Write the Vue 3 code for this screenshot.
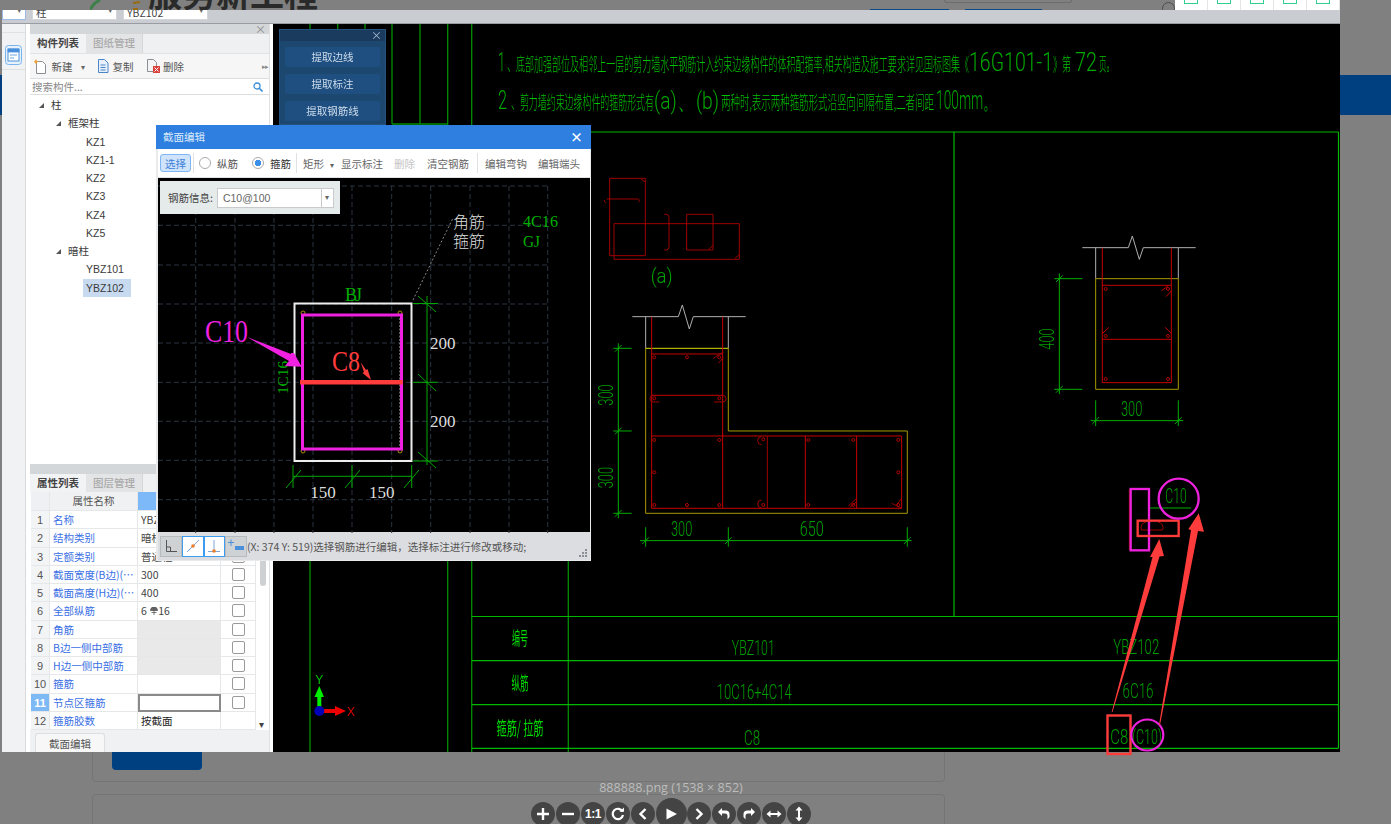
<script setup>
const tree = [
  { label: '柱', level: 0, open: true },
  { label: '框架柱', level: 1, open: true },
  { label: 'KZ1', level: 2 },
  { label: 'KZ1-1', level: 2 },
  { label: 'KZ2', level: 2 },
  { label: 'KZ3', level: 2 },
  { label: 'KZ4', level: 2 },
  { label: 'KZ5', level: 2 },
  { label: '暗柱', level: 1, open: true },
  { label: 'YBZ101', level: 2 },
  { label: 'YBZ102', level: 2, selected: true },
]

const props = [
  { name: '名称', value: 'YBZ102', check: true },
  { name: '结构类别', value: '暗柱', check: true },
  { name: '定额类别', value: '普通柱', check: true },
  { name: '截面宽度(B边)(mm)', value: '300', check: true },
  { name: '截面高度(H边)(mm)', value: '400', check: true },
  { name: '全部纵筋', value: '6', rebar: '16', check: true },
  { name: '角筋', value: '', grey: true, check: true },
  { name: 'B边一侧中部筋', value: '', grey: true, check: true },
  { name: 'H边一侧中部筋', value: '', grey: true, check: true },
  { name: '箍筋', value: '', check: true },
  { name: '节点区箍筋', value: '', active: true, check: true },
  { name: '箍筋胶数', value: '按截面', dark: true },
]

const extractButtons = ['提取边线', '提取标注', '提取钢筋线']
const tabIcons = [0, 1, 2, 3, 4]

// grid of the section editor canvas
const gridX = [195.7, 235, 274, 313, 352, 391.7, 430.7, 470, 509, 547.7]
const gridY = [186, 225.3, 265, 304, 343, 382.3, 421.3, 460.3, 499.7]

// rebar dots, drawn in 3x coordinates
const lDots = [[193,622],[291,622],[388,622],[193,745],[388,745],[193,870],[388,870],[520,868],[655,870],[790,870],[925,870],[193,967],[925,967],[193,1065],[291,1065],[388,1065],[520,1065],[655,1065],[790,1065],[925,1065]]
const rDots = [[197,207],[384,207],[197,348],[384,348],[197,477],[384,477]]
</script>

<template>
  <div class="page">
    <header class="site-head">
      <svg class="logo" width="54" height="10" viewBox="0 0 54 10">
        <path d="M0 10Q3 3 10 0" fill="none" stroke="#3f7f4a" stroke-width="3" />
        <path d="M43 3L50 2M43 9H48" fill="none" stroke="#9a6a10" stroke-width="2" />
      </svg>
      <div class="site-title">服务新工程</div>
      <div class="site-right">
        <div class="site-links"><span></span><span></span></div>
        <div class="site-search"></div>
        <div class="site-ring"></div>
        <div class="site-tabs">
          <div v-for="i in tabIcons" :key="i" class="site-tab"><span></span></div>
        </div>
      </div>
    </header>
    <div class="nav-band"></div>
    <main class="content">
      <div class="card card-a"><div class="blue-btn"></div></div>
      <div class="card card-b"></div>
    </main>

    <div class="lightbox">
      <div class="strip">
        <div class="sel sel-first"><span>▾</span></div>
        <div class="sel sel-a">柱<span>▾</span></div>
        <div class="sel sel-b">YBZ102<span>▾</span></div>
      </div>
      <div class="body">
        <div class="rail">
          <div class="rail-top"></div>
          <div class="rail-icon">
            <svg width="17" height="20" viewBox="0 0 17 20">
              <rect x="0.5" y="0.5" width="16" height="19" rx="3" fill="#e6f1fc" stroke="#78b4ee" />
              <rect x="3" y="4" width="11" height="12" fill="#fff" stroke="#4a8fdc" />
              <path d="M3 4h11v3H3zM5 10h7M5 13h4" fill="#4a8fdc" stroke="#4a8fdc" stroke-width="0.8" />
            </svg>
          </div>
        </div>

        <div class="panels">
          <section class="panel panel-list">
            <div class="panel-head">×</div>
            <div class="tabs">
              <div class="tab on">构件列表</div>
              <div class="tab">图纸管理</div>
            </div>
            <div class="tools">
              <span class="tool">
                <svg width="14" height="15" viewBox="0 0 14 15"><path d="M2.5 2.5h6l3 3v9h-9z" fill="#fff" stroke="#8a8f95" /><path d="M2 0l1 2 2 .5-2 1-1 2-1-2L-1 2.500 1 2z" fill="#e9a13b" /></svg>
                新建<i>▾</i>
              </span>
              <span class="tool">
                <svg width="12" height="14" viewBox="0 0 12 14"><path d="M1.500 .5h6l3.500 3.500v9.500h-9.500z" fill="#e8f1fb" stroke="#4a86c8" /><path d="M3.500 6h5M3.500 8.500h5M3.500 11h5" stroke="#4a86c8" /></svg>
                复制
              </span>
              <span class="tool">
                <svg width="13" height="14" viewBox="0 0 13 14"><path d="M.5.5h6l3 3v9h-9z" fill="#f4f4f4" stroke="#8a8f95" /><rect x="6" y="7" width="7" height="7" fill="#d9403a" /><path d="M7.500 8.500l4 4m0-4l-4 4" stroke="#fff" /></svg>
                删除
              </span>
              <span class="more">▸▸</span>
            </div>
            <div class="search">
              <span>搜索构件...</span>
              <svg width="10" height="10" viewBox="0 0 10 10"><circle cx="4" cy="4" r="3" fill="none" stroke="#3b8fd8" stroke-width="1.300" /><path d="M6.300 6.300L9.500 9.500" stroke="#3b8fd8" stroke-width="1.600" /></svg>
            </div>
            <ul class="tree">
              <li v-for="node in tree" :key="node.label" :class="['tree-row', 'lv' + node.level]">
                <i v-if="node.open" class="tri"></i>
                <span :class="{ picked: node.selected }">{{ node.label }}</span>
              </li>
            </ul>
          </section>

          <section class="panel panel-props">
            <div class="panel-head"></div>
            <div class="tabs">
              <div class="tab on">属性列表</div>
              <div class="tab">图层管理</div>
            </div>
            <div class="prop-wrap">
              <div class="prop-table">
                <div class="prop-row prop-header">
                  <div class="c-idx"></div>
                  <div class="c-name">属性名称</div>
                  <div class="c-val"></div>
                  <div class="c-chk"></div>
                </div>
                <div v-for="(p, i) in props" :key="p.name" class="prop-row">
                  <div :class="['c-idx', { on: p.active }]">{{ i + 1 }}</div>
                  <div class="c-name link"><span>{{ p.name }}</span></div>
                  <div :class="['c-val', { grey: p.grey, active: p.active, dark: p.dark }]">
                    {{ p.value }}
                    <template v-if="p.rebar">
                      <svg width="8" height="8" viewBox="0 0 8 8"><path d="M.5 3.500a3.500 3.500 0 0 1 7 0zM4 0v8M1.500 5.500h5" fill="#666" stroke="#555" stroke-width=".8" /></svg>{{ p.rebar }}
                    </template>
                  </div>
                  <div class="c-chk"><i v-if="p.check" class="box"></i></div>
                </div>
              </div>
              <div class="scroll">
                <div class="thumb"></div>
                <div class="down">▾</div>
              </div>
            </div>
            <div class="prop-foot"><div class="foot-tab">截面编辑</div></div>
          </section>
        </div>

        <div class="cad">
          <svg class="cad-svg" width="1067" height="728" viewBox="273 24 1067 728">
            <path class="bar" d="M310 24V752M337.700 24V124M365 24V124M392 24V124M420 24V124M447.700 24V752M392 124H447.700M471.700 24V752M568.300 132V752" />
            <path class="bar-lt" d="M471.700 132H1338.500M954 132V617M1338.500 132V748.300M471.700 616.500H1338.500M471.700 660.700H1338.500M471.700 704.700H1338.500M471.700 748.300H1338.500" />

            <!-- notes -->
            <g class="note">
              <text y="71">
                <tspan x="498" font-size="26" textLength="7" lengthAdjust="spacingAndGlyphs">1</tspan>
                <tspan class="cjk" x="507" font-size="18" textLength="462" lengthAdjust="spacingAndGlyphs">、底部加强部位及相邻上一层的剪力墙水平钢筋计入约束边缘构件的体积配箍率,相关构造及施工要求详见国标图集《</tspan>
                <tspan x="969" font-size="26" textLength="84" lengthAdjust="spacingAndGlyphs">16G101-1</tspan>
                <tspan class="cjk" x="1053" font-size="18" textLength="18" lengthAdjust="spacingAndGlyphs">》第</tspan>
                <tspan x="1075" font-size="26" textLength="22" lengthAdjust="spacingAndGlyphs">72</tspan>
                <tspan class="cjk" x="1099" font-size="18" textLength="15" lengthAdjust="spacingAndGlyphs">页。</tspan>
              </text>
              <text y="109">
                <tspan x="498" font-size="26" textLength="9" lengthAdjust="spacingAndGlyphs">2</tspan>
                <tspan class="cjk" x="511" font-size="18" textLength="143" lengthAdjust="spacingAndGlyphs">、剪力墙约束边缘构件的箍筋形式有</tspan>
                <tspan x="654" font-size="23" textLength="65" lengthAdjust="spacingAndGlyphs">(a)、(b)</tspan>
                <tspan class="cjk" x="721" font-size="18" textLength="213" lengthAdjust="spacingAndGlyphs">两种时,表示两种箍筋形式沿竖向间隔布置,二者间距</tspan>
                <tspan x="936" font-size="26" textLength="61" lengthAdjust="spacingAndGlyphs">100mm。</tspan>
              </text>
            </g>

            <!-- L shaped wall -->
            <g transform="translate(590 150) scale(0.3333)">
              <g class="red-dk">
                <path d="M59 85H166V317H59ZM72 221H448V328H72ZM290 193H369V300H290Z" />
                <path d="M43 150a6 6 0 0 0 6 8M50 147H145a6 6 0 0 1 0 10M223 193h6q8 0 8 10V290q0 10-8 10h-6M154 88L166 96M356 298L369 286M434 326L448 314" />
              </g>
              <text class="dim" x="215" y="400" font-size="62" text-anchor="middle" textLength="66" lengthAdjust="spacingAndGlyphs">(a)</text>
              <path class="grey" d="M127 500H265L277 465L298 537L310 500H467M167 500V595M415 500V595" />
              <path class="yl" d="M167 595V1090H952V843H415V595" />
              <path class="yl-br" d="M167 595H415" />
              <path class="red" d="M185 500V1075M398 500V1075M185 612H398M185 736H398M185 858H935V1075H185M646 858V1075M800 858V1075" />
              <path class="red-dk" d="M532 858V1075M370 625L398 607M385 640L400 622M190 736a10 10 0 0 0 0 20H208M398 736a10 10 0 0 1 0 20H372M515 860a8 8 0 0 0 0 24M515 1050a8 8 0 0 0 0 24M775 1068L800 1045M780 1072L800 1055M905 1060L935 1075M920 1065L935 1045" />
              <circle v-for="d in lDots" :key="d.join()" class="dot" :cx="d[0]" :cy="d[1]" r="4.500" />
              <path class="dim-line" d="M85 580V1105M70 595H125M70 843H125M70 1090H125M75 605L95 585M75 853L95 833M75 1100L95 1080M150 1172H965M167 1132V1190M415 1132V1190M952 1132V1190M157 1182L177 1162M405 1182L425 1162M942 1182L962 1162" />
              <text class="dim" transform="translate(70 735) rotate(-90)" font-size="60" text-anchor="middle" textLength="64" lengthAdjust="spacingAndGlyphs">300</text>
              <text class="dim" transform="translate(70 983) rotate(-90)" font-size="60" text-anchor="middle" textLength="64" lengthAdjust="spacingAndGlyphs">300</text>
              <text class="dim" x="275" y="1158" font-size="60" text-anchor="middle" textLength="64" lengthAdjust="spacingAndGlyphs">300</text>
              <text class="dim" x="665" y="1158" font-size="60" text-anchor="middle" textLength="72" lengthAdjust="spacingAndGlyphs">650</text>
            </g>

            <!-- column YBZ102 -->
            <g transform="translate(1040 220) scale(0.3333)">
              <path class="grey" d="M127 83H265L277 48L298 118L310 83H467M167 83V176M415 83V176" />
              <path class="yl" d="M167 176H415V508H167Z" />
              <path class="red" d="M187 83V488H394V83M187 196H394M187 358H394M365 212L385 197M378 230L394 213M188 340L207 322M375 322L394 340" />
              <circle v-for="d in rDots" :key="d.join()" class="dot" :cx="d[0]" :cy="d[1]" r="4.500" />
              <path class="dim-line" d="M58 160V522M43 176H127M43 508H127M48 186L68 166M48 518L68 498M152 602H430M167 541V618M415 541V618M157 612L177 592M405 612L425 592" />
              <text class="dim" transform="translate(43 357) rotate(-90)" font-size="60" text-anchor="middle" textLength="64" lengthAdjust="spacingAndGlyphs">400</text>
              <text class="dim" x="275" y="587" font-size="60" text-anchor="middle" textLength="64" lengthAdjust="spacingAndGlyphs">300</text>
            </g>

            <!-- section detail with markup -->
            <g transform="translate(1090 470) scale(0.3333)">
              <path class="dim-line" d="M180 114H303" />
              <path class="red-dk" stroke-width="5" d="M118 57V241M154 180a18 18 0 0 1 14-24M154 180H218a18 18 0 0 0-14-24" />
              <text class="dim" x="258" y="100" font-size="62" text-anchor="middle" textLength="64" lengthAdjust="spacingAndGlyphs">C10</text>
              <rect x="122" y="57" width="55" height="184" fill="none" stroke="#ee22dd" stroke-width="7" />
              <rect x="143" y="152" width="123" height="46" fill="none" stroke="#ff3c3c" stroke-width="7" />
              <circle cx="266" cy="86" r="60" fill="none" stroke="#ee22dd" stroke-width="7" />
            </g>

            <!-- table -->
            <g class="note-sm">
              <text class="cjk" x="520" y="645" font-size="18" text-anchor="middle" textLength="16" lengthAdjust="spacingAndGlyphs">编号</text>
              <text class="cjk" x="520" y="690" font-size="18" text-anchor="middle" textLength="17" lengthAdjust="spacingAndGlyphs">纵筋</text>
              <text class="cjk" x="520" y="735" font-size="18" text-anchor="middle" textLength="47" lengthAdjust="spacingAndGlyphs">箍筋/ 拉筋</text>
            </g>
            <g class="cell">
              <text x="753.300" y="655" text-anchor="middle" textLength="43" lengthAdjust="spacingAndGlyphs">YBZ101</text>
              <text x="754.300" y="699" text-anchor="middle" textLength="75" lengthAdjust="spacingAndGlyphs">10C16+4C14</text>
              <text x="752" y="745" text-anchor="middle" textLength="16" lengthAdjust="spacingAndGlyphs">C8</text>
              <text x="1136.300" y="654" text-anchor="middle" textLength="46" lengthAdjust="spacingAndGlyphs">YBZ102</text>
              <text x="1138" y="698" text-anchor="middle" textLength="31" lengthAdjust="spacingAndGlyphs">6C16</text>
              <text x="1119.300" y="744" text-anchor="middle" textLength="18" lengthAdjust="spacingAndGlyphs">C8</text>
              <text x="1147" y="744" text-anchor="middle" textLength="30" lengthAdjust="spacingAndGlyphs">(C10)</text>
            </g>
            <rect x="1107.500" y="715.500" width="23" height="38.500" fill="none" stroke="#ff3c3c" stroke-width="2.400" />
            <ellipse cx="1147.300" cy="735" rx="16" ry="15.500" fill="none" stroke="#ee22dd" stroke-width="2.200" />
            <polygon class="arrow" points="1111.700,712 1152.500,557 1150,557 1159.300,539 1164,556 1159.500,556.500 1112.500,712" />
            <polygon class="arrow" points="1159,725 1191,530 1188.300,529.300 1198.700,513.300 1204,531.700 1198,531 1160,725" />

            <!-- axis -->
            <path d="M319.300 711V696" stroke="#00ee00" stroke-width="4" />
            <path d="M314.500 697L319.300 686L324 697Z" fill="#00ee00" />
            <path d="M319.300 711H336" stroke="#ee0000" stroke-width="4" />
            <path d="M335 706L346 711L335 716Z" fill="#ee0000" />
            <circle cx="319.300" cy="711" r="5" fill="#0000b8" />
            <text class="axis" x="319.300" y="684" fill="#00c000" text-anchor="middle">Y</text>
            <text class="axis" x="351" y="716" fill="#e00000" text-anchor="middle">X</text>
          </svg>

          <div class="extract">
            <div class="extract-head">×</div>
            <div v-for="b in extractButtons" :key="b" class="extract-btn">{{ b }}</div>
          </div>
        </div>
      </div>

      <!-- floating dialog -->
      <div class="dialog">
        <div class="dlg-title"><span>截面编辑</span><b>×</b></div>
        <div class="dlg-tools">
          <span class="pick">选择</span>
          <i class="sep"></i>
          <span class="radio-item"><i class="radio"></i>纵筋</span>
          <span class="radio-item"><i class="radio checked"></i>箍筋</span>
          <i class="sep"></i>
          <span class="t-btn shape">矩形<em>▾</em></span>
          <span class="t-btn">显示标注</span>
          <span class="t-btn off">删除</span>
          <span class="t-btn">清空钢筋</span>
          <i class="sep"></i>
          <span class="t-btn">编辑弯钩</span>
          <span class="t-btn">编辑端头</span>
        </div>
        <div class="dlg-canvas">
          <svg width="432" height="355" viewBox="158 178 432 355">
            <line v-for="x in gridX" :key="'x' + x" class="grid" :x1="x" :x2="x" y1="186" y2="533" />
            <line v-for="y in gridY" :key="'y' + y" class="grid" :y1="y" :y2="y" x1="158" x2="550" />
            <path d="M413 300L453 218" stroke="#888" stroke-dasharray="2 2" fill="none" />
            <text class="cn-lbl" x="453" y="228">角筋</text>
            <text class="cn-lbl" x="453" y="247">箍筋</text>
            <text class="sf green" x="523" y="227" font-size="16" textLength="35" lengthAdjust="spacingAndGlyphs">4C16</text>
            <text class="sf green" x="523" y="247" font-size="16" textLength="17" lengthAdjust="spacingAndGlyphs">GJ</text>
            <text class="sf green" x="345" y="301" font-size="18" textLength="17" lengthAdjust="spacing">BJ</text>

            <rect x="294.500" y="303.500" width="117" height="157.500" fill="none" stroke="#eee" stroke-width="2" />
            <path d="M303.500 318V447M400 318V447" stroke="#bbb" stroke-dasharray="2 1.500" fill="none" />
            <g fill="none" stroke="#a89000">
              <circle cx="303" cy="313" r="2" /><circle cx="400" cy="313" r="2" />
              <circle cx="303" cy="451" r="2" /><circle cx="400" cy="451" r="2" />
            </g>
            <rect x="302.500" y="315" width="99" height="134" fill="none" stroke="#f020e0" stroke-width="3" />
            <path d="M300 382.300H402.700" stroke="#ff3c3c" stroke-width="4.500" />

            <path class="d-green" d="M427 296V465M413 303.500H438M413 382.300H438M413 461H438M418 296L436 312M418 374L436 391M418 452L436 468M293 476.300H411.700M293 465V488M352 465V488M411.700 465V488M286 488L301 470M345 488L360 470M404 488L419 470" />
            <text class="sf wh" x="430" y="349" font-size="17">200</text>
            <text class="sf wh" x="430" y="427" font-size="17">200</text>
            <text class="sf wh" x="323" y="498" font-size="17" text-anchor="middle">150</text>
            <text class="sf wh" x="381.700" y="498" font-size="17" text-anchor="middle">150</text>
            <text class="sf green" transform="translate(288 394) rotate(-90)" font-size="15" textLength="33" lengthAdjust="spacingAndGlyphs">1C16</text>

            <text class="sf" x="205" y="342" font-size="31" fill="#f020e0" textLength="43" lengthAdjust="spacingAndGlyphs">C10</text>
            <polygon points="247,337 291,354 291,353 294,353 301.700,366.700 285,366 289,361" fill="#f020e0" />
            <text class="sf" x="332" y="371" font-size="29" fill="#ff3c3c" textLength="28" lengthAdjust="spacingAndGlyphs">C8</text>
            <polygon points="360.700,362.300 366,370 367.500,369 371,380 362.500,373 364,372" fill="#ff3c3c" />
          </svg>
          <div class="info">
            <span>钢筋信息:</span>
            <div class="combo"><span>C10@100</span><i>▾</i></div>
          </div>
        </div>
        <div class="dlg-status">
          <div class="snap">
            <div class="snap-btn">
              <svg width="18" height="16" viewBox="0 0 18 16"><path d="M4.500 2V13.500H15M4.500 9H8.500V13.500" fill="none" stroke="#555" /></svg>
            </div>
            <div class="snap-btn on">
              <svg width="18" height="16" viewBox="0 0 18 16"><path d="M3 14L15 2" stroke="#7aa6d8" /><circle cx="9" cy="8" r="1.800" fill="#ee7d2a" /></svg>
            </div>
            <div class="snap-btn on">
              <svg width="18" height="16" viewBox="0 0 18 16"><path d="M9 2V13M3 13.500H15" stroke="#7aa6d8" /><circle cx="9" cy="13" r="1.800" fill="#ee7d2a" /></svg>
            </div>
            <div class="snap-btn">
              <svg width="18" height="16" viewBox="0 0 18 16"><path d="M4 1.500V8M1 4.500H7" stroke="#4a8fdc" /><rect x="8" y="8" width="9" height="4" fill="#4a8fdc" /></svg>
            </div>
          </div>
          <span class="status-text">(X: 374 Y: 519)选择钢筋进行编辑，选择标注进行修改或移动;</span>
          <svg class="grip" width="8" height="8" viewBox="0 0 8 8"><path d="M6 0h2v2H6zM3 3h2v2H3zM6 3h2v2H6zM0 6h2v2H0zM3 6h2v2H3zM6 6h2v2H6z" fill="#8a8f95" /></svg>
        </div>
      </div>
    </div>

    <!-- viewer caption and controls -->
    <div class="caption">888888.png (1538 × 852)</div>
    <div class="controls">
      <button class="ctl"><svg width="14" height="14" viewBox="0 0 14 14"><path d="M7 1V13M1 7H13" stroke="#fff" stroke-width="2.400" /></svg></button>
      <button class="ctl"><svg width="14" height="14" viewBox="0 0 14 14"><path d="M1 7H13" stroke="#fff" stroke-width="2.400" /></svg></button>
      <button class="ctl one">1:1</button>
      <button class="ctl"><svg width="14" height="14" viewBox="0 0 14 14"><path d="M11.500 4.500A5.200 5.200 0 1 0 12 8" fill="none" stroke="#fff" stroke-width="2.200" /><path d="M8.500 4.800H13V0.500Z" fill="#fff" /></svg></button>
      <button class="ctl"><svg width="14" height="14" viewBox="0 0 14 14"><path d="M9.500 2L4.500 7L9.500 12" fill="none" stroke="#fff" stroke-width="2.400" /></svg></button>
      <button class="ctl play"><svg width="14" height="14" viewBox="0 0 14 14"><path d="M2.500 1.500L13 7L2.500 12.500Z" fill="#fff" /></svg></button>
      <button class="ctl"><svg width="14" height="14" viewBox="0 0 14 14"><path d="M4.500 2L9.500 7L4.500 12" fill="none" stroke="#fff" stroke-width="2.400" /></svg></button>
      <button class="ctl"><svg width="14" height="14" viewBox="0 0 14 14"><path d="M5 1L1 5L5 9V6.500H8Q10.500 6.500 10.500 9V12.500L12.500 10V7Q12.500 3.500 8.500 3.500H5Z" fill="#fff" /></svg></button>
      <button class="ctl"><svg width="14" height="14" viewBox="0 0 14 14"><path d="M9 1L13 5L9 9V6.500H6Q3.500 6.500 3.500 9V12.500L1.500 10V7Q1.500 3.500 5.500 3.500H9Z" fill="#fff" /></svg></button>
      <button class="ctl"><svg width="16" height="14" viewBox="0 0 16 14"><path d="M3 7H13" stroke="#fff" stroke-width="2" /><path d="M4.500 3.500L0.500 7L4.500 10.500ZM11.500 3.500L15.500 7L11.500 10.500Z" fill="#fff" /></svg></button>
      <button class="ctl"><svg width="14" height="16" viewBox="0 0 14 16"><path d="M7 3V13" stroke="#fff" stroke-width="2" /><path d="M3.500 4.500L7 .5L10.500 4.500ZM3.500 11.500L7 15.500L10.500 11.500Z" fill="#fff" /></svg></button>
    </div>
  </div>
</template>

<style>
html, body { margin: 0; background: #7f807f; }
</style>

<style scoped>
.page {
  position: relative;
  width: 1391px;
  height: 824px;
  overflow: hidden;
  background: #7f807f;
  font-family: "Noto Sans CJK SC", "Liberation Sans", sans-serif;
  font-size: 10.5px;
  color: #333;
}

/* dimmed page behind the viewer */
.site-head {
  display: flex;
  align-items: flex-start;
  height: 75px;
  padding-left: 90px;
}
.logo { display: block; margin-right: 4px; }
.site-title {
  margin-top: -25px;
  font-size: 34px;
  line-height: 35px;
  font-weight: 700;
  color: #2a2a2a;
}
.site-right {
  display: flex;
  align-items: flex-start;
  margin-left: auto;
  margin-right: 51px;
}
.site-links {
  display: flex;
  justify-content: space-between;
  width: 172px;
  margin-top: 9px;
}
.site-links span { height: 1px; width: 79px; background: #0a4a8a; }
.site-links span + span { width: 77px; }
.site-search {
  width: 128px;
  height: 3px;
  margin-left: -98px;
  border: 1px solid #6c6d6c;
  border-top: none;
  box-sizing: border-box;
  border-radius: 0 0 4px 4px;
}
.site-ring {
  width: 13px;
  height: 13px;
  margin-left: 90px;
  margin-top: 2px;
  box-sizing: border-box;
  border: 1px solid #4c4d4c;
  border-radius: 50%;
}
.site-tabs { display: flex; }
.site-tab {
  width: 32px;
  height: 10px;
  background: #fff;
  border-right: 1px solid #e4e4e4;
  display: flex;
  justify-content: center;
  overflow: hidden;
}
.site-tab span {
  width: 12px;
  height: 3px;
  border: 1px solid #2fcf90;
  border-top: none;
}
.nav-band { height: 40px; background: #004080; }
.content {
  width: 853px;
  margin-left: 92px;
  padding-top: 590px;
}
.card {
  border: 1px solid #737473;
  border-radius: 4px;
  background: #7f807f;
}
.card-a { height: 75px; margin-bottom: 12px; }
.blue-btn {
  width: 90px;
  height: 40px;
  margin: 12px 0 0 19px;
  background: #004080;
  border-radius: 4px;
  position: relative;
  top: 12px;
}
.card-b { height: 60px; }

/* the screenshot in the viewer */
.lightbox {
  position: absolute;
  left: 2px;
  top: 10px;
  width: 1338px;
  height: 742px;
  background: #fff;
  filter: blur(0.3px);
}
.strip {
  display: flex;
  height: 13px;
  overflow: hidden;
  background: #c9ccd0;
  border-bottom: 1px solid #999da1;
}
.sel {
  position: relative;
  height: 20px;
  margin-top: -10px;
  background: #fff;
  border: 1px solid #d4d6d9;
  line-height: 24px;
  padding-left: 3px;
  box-sizing: border-box;
  margin-right: 6px;
  color: #444;
}
.sel span { position: absolute; right: 3px; top: -3px; color: #666; font-size: 9px; }
.sel-first { width: 24px; border-color: #9bbbe6; }
.sel-a { width: 85px; }
.sel-b { width: 85px; }

.body { display: flex; height: 728px; }
.rail {
  width: 23px;
  background: #f1f2f3;
  border-right: 1px solid #d8dadc;
}
.rail-top { height: 8px; border-bottom: 1px solid #dfe1e3; }
.rail-icon {
  padding: 12px 0 0 3px;
  height: 24px;
  border-bottom: 1px solid #dfe1e3;
}
.rail-icon svg { display: block; }

.panels {
  display: flex;
  flex-direction: column;
  gap: 4px;
  width: 241px;
  padding: 0 0 0 4px;
  background: #fff;
  box-sizing: content-box;
  margin-right: 0;
}
.panel { width: 240px; border-right: 1px solid #dfe1e3; box-sizing: border-box; }
.panel-list { height: 436px; display: flex; flex-direction: column; }
.panel-props { height: 288px; display: flex; flex-direction: column; }
.panel-head {
  height: 10px;
  line-height: 10px;
  background: #d4d7da;
  text-align: right;
  padding-right: 3px;
  color: #888;
  font-size: 11px;
}
.tabs {
  display: flex;
  height: 19px;
  background: #eff0f1;
}
.tab {
  width: 56px;
  line-height: 18px;
  text-align: center;
  color: #aaa;
  background: #e3e4e6;
  border-right: 1px solid #d4d7da;
  font-weight: 500;
}
.tab.on { background: #f2f3f4; color: #444; font-weight: 700; border-right: none; }
.tools {
  display: flex;
  align-items: center;
  height: 26px;
  background: #f6f6f6;
  border-top: 1px solid #e0e2e4;
  border-bottom: 1px solid #dcdee0;
  box-sizing: border-box;
  padding-left: 4px;
  gap: 13px;
  color: #555;
  font-size: 10.5px;
}
.tool { display: flex; align-items: center; gap: 3.5px; }
.tool i { font-style: normal; font-size: 8px; margin-left: 5px; margin-right: -1px; color: #666; }
.more { margin-left: auto; margin-right: 1px; color: #888; font-size: 7px; letter-spacing: -1px; }
.search {
  display: flex;
  justify-content: space-between;
  align-items: center;
  height: 16px;
  padding: 0 6px 0 2px;
  background: #fff;
  border-bottom: 1px solid #dcdee0;
  box-sizing: border-box;
  color: #888;
}
.tree { list-style: none; margin: 0; padding: 1px 0 0; flex: 1; background: #fff; }
.tree-row {
  position: relative;
  height: 18.25px;
  line-height: 18.25px;
  color: #3b3b3b;
  box-sizing: border-box;
}
.tree-row span { display: inline-block; padding: 0 3px; }
.picked { background: #c8daf0; height: 18.25px; padding-right: 7px !important; }
.lv0 { padding-left: 18px; }
.lv1 { padding-left: 35px; }
.lv2 { padding-left: 53px; font-family: "Liberation Sans", sans-serif; font-size: 10.5px; }
.tri {
  position: absolute;
  top: 7px;
  width: 0;
  height: 0;
  border-left: 5px solid transparent;
  border-bottom: 5px solid #555;
}
.lv0 .tri { left: 9px; }
.lv1 .tri { left: 26px; }

.prop-wrap { display: flex; padding-left: 1px; background: #fff; }
.prop-table { width: 225px; }
.prop-row {
  display: grid;
  grid-template-columns: 19px 88px 83px 35px;
  height: 18.25px;
  line-height: 18.5px;
}
.prop-header { height: 19.25px; }
.prop-row > div {
  border-right: 1px solid #e6e7e9;
  border-bottom: 1px solid #e6e7e9;
  box-sizing: border-box;
  overflow: hidden;
  white-space: nowrap;
}
.c-idx { text-align: center; background: #f3f4f5; color: #555; font-size: 11px; font-family: "Liberation Sans", sans-serif; }
.c-idx.on { background: #7db9f5; color: #fff; font-weight: 700; }
.prop-header .c-idx { background: #eef0f3; }
.prop-header .c-name { background: #f0f1f2; text-align: center; color: #555; }
.prop-header .c-val { background: #7db8f8; }
.link { color: #3a6fe4; padding-left: 3px; }
.link span { display: block; overflow: hidden; text-overflow: ellipsis; }
.c-val { padding-left: 3px; color: #444; }
.c-val svg { margin: 0 0 2px 1px; vertical-align: middle; }
.c-val.grey { background: #e9e9e9; }
.c-val.active { border: 1px solid #8a8a8a; outline: 1px solid #8a8a8a; outline-offset: -2px; background: #fff; }
.c-val.dark { color: #222; }
.c-chk { display: flex; align-items: center; justify-content: center; }
.box {
  display: block;
  width: 11px;
  height: 11px;
  border: 1px solid #9a9a9a;
  border-radius: 2px;
  background: #fff;
}
.scroll { position: relative; flex: 1; background: #fff; }
.thumb {
  position: absolute;
  left: 4px;
  top: 58px;
  width: 6px;
  height: 36px;
  border-radius: 3px;
  background: #cfd0d1;
}
.down { position: absolute; left: 3px; bottom: 0; font-size: 10px; line-height: 12px; color: #444; }
.prop-foot { flex: 1; background: #f0f1f2; padding: 3px 0 0 5px; }
.foot-tab {
  width: 68px;
  height: 18px;
  line-height: 20px;
  text-align: center;
  background: #f7f7f7;
  border: 1px solid #dcdee0;
  border-bottom: none;
  border-radius: 3px 3px 0 0;
  color: #555;
}

.cad {
  position: relative;
  width: 1067px;
  height: 728px;
  margin-left: 2px;
  background: #000;
}
.cad-svg { display: block; overflow: visible; }
.bar { fill: none; stroke: #008f00; stroke-width: 1.300; }
.bar-lt { fill: none; stroke: #00b800; stroke-width: 1.200; }
.note text, .note tspan { fill: #00a800; font-family: "Roboto", "Liberation Sans", sans-serif; font-weight: 300; }
.note .cjk { fill: #00c400; font-family: "Noto Sans CJK SC", sans-serif; }
.note-sm .cjk { fill: #00dd00; font-family: "Noto Sans CJK SC", sans-serif; }
.cell text { fill: #00a000; font-family: "Roboto", "Liberation Sans", sans-serif; font-size: 21px; font-weight: 300; }
.red-dk { fill: none; stroke: #a00000; stroke-width: 3; }
.red { fill: none; stroke: #c80000; stroke-width: 3; }
.grey { fill: none; stroke: #b0b0b0; stroke-width: 3; }
.yl { fill: none; stroke: #a89a00; stroke-width: 3; }
.yl-br { fill: none; stroke: #dcdc00; stroke-width: 3; }
.dot { fill: none; stroke: #b00000; stroke-width: 3; }
.dim-line { fill: none; stroke: #00b000; stroke-width: 3; }
.dim { fill: #00a000; font-family: "Roboto", "Liberation Sans", sans-serif; font-weight: 300; }
.arrow { fill: #ff3c3c; }
.axis { font-family: "Liberation Sans", sans-serif; font-size: 12px; }

.extract {
  position: absolute;
  left: 6px;
  top: 5px;
  width: 107px;
  height: 96px;
  box-sizing: border-box;
  background: #1c4870;
  border: 1px solid #26527e;
}
.extract-head {
  height: 11px;
  background: #1a3a5e;
  line-height: 11px;
  text-align: right;
  padding-right: 3px;
  color: #a8bcd0;
  font-size: 11px;
  margin-bottom: 6px;
}
.extract-btn {
  height: 20px;
  line-height: 20px;
  margin: 0 5px 7px;
  text-align: center;
  background: #1f4f80;
  color: #ccdcec;
  border-radius: 2px;
}

.dialog {
  position: absolute;
  left: 154px;
  top: 115px;
  width: 435px;
  height: 436px;
  display: flex;
  flex-direction: column;
  box-sizing: border-box;
  padding: 0 1px 1px 2px;
  background: #e8eaec;
  z-index: 2;
}
.dlg-title {
  display: flex;
  justify-content: space-between;
  align-items: center;
  height: 24px;
  margin: 0 -1px 0 -2px;
  padding: 0 7px 2px;
  box-sizing: border-box;
  background: #2e7fdf;
  color: #dceafa;
  flex: none;
}
.dlg-title b { color: #fff; font-size: 13px; font-weight: 700; margin-right: 1px; }
.dlg-tools {
  display: flex;
  align-items: center;
  height: 29px;
  padding-left: 2px;
  background: #fff;
  flex: none;
  color: #555;
  border-bottom: 1px solid #e0e2e4;
  box-sizing: border-box;
  white-space: nowrap;
}
.pick {
  flex: none;
  width: 31px;
  height: 18px;
  line-height: 17px;
  text-align: center;
  background: #cfe3fb;
  border: 1px solid #7db5f5;
  border-radius: 3px;
  box-sizing: border-box;
  color: #3c80d8;
}
.sep { flex: none; width: 1px; height: 20px; margin: 0 2px; background: #dfe1e3; }
.radio-item { display: flex; flex: none; align-items: center; gap: 6px; margin-left: 3px; margin-right: 14px; }
.radio-item + .radio-item { margin-left: 0; margin-right: 3px; color: #333; }
.radio {
  display: block;
  width: 10px;
  height: 10px;
  border: 1px solid #aaa;
  border-radius: 50%;
  background: #fff;
}
.radio.checked { background: radial-gradient(circle, #3b8fe8 0 3px, #fff 3.500px); }
.t-btn { flex: none; padding: 0 5.5px; color: #666; }
.t-btn.off { color: #c4c4c4; padding-right: 6.5px; }
.shape { padding: 0 1.5px 0 4px; }
.shape em { font-style: normal; font-size: 8px; margin-left: 6px; }
.dlg-canvas {
  position: relative;
  flex: 1;
  background: #000;
  min-height: 0;
}
.dlg-canvas svg { display: block; }
.grid { stroke: #2a3440; stroke-width: 1; stroke-dasharray: 5 3; }
.cn-lbl { fill: #dddddd; font-family: "Noto Sans CJK SC", sans-serif; font-size: 16px; font-weight: 300; }
.sf { font-family: "Liberation Serif", serif; }
.green { fill: #00b000; }
.wh { fill: #dddddd; }
.d-green { fill: none; stroke: #00a800; stroke-width: 1; }
.info {
  position: absolute;
  left: 2px;
  top: 3px;
  width: 180px;
  height: 33px;
  display: flex;
  align-items: center;
  gap: 4px;
  box-sizing: border-box;
  padding-left: 8px;
  background: #e5eaea;
  color: #444;
}
.combo {
  display: flex;
  justify-content: space-between;
  align-items: center;
  width: 117px;
  height: 20px;
  box-sizing: border-box;
  padding-left: 5px;
  background: #fff;
  border: 1px solid #c8cacc;
  color: #666;
  font-family: "Liberation Sans", sans-serif;
}
.combo i {
  width: 11px;
  height: 18px;
  line-height: 17px;
  text-align: center;
  font-style: normal;
  font-size: 8px;
  border-left: 1px solid #c8cacc;
}
.dlg-status {
  display: flex;
  align-items: center;
  height: 28px;
  background: #dcdde0;
  flex: none;
}
.snap {
  display: flex;
  padding-left: 2px;
  width: 89px;
  box-sizing: border-box;
  flex: none;
}
.snap-btn {
  width: 22px;
  height: 21px;
  display: flex;
  align-items: center;
  justify-content: center;
  box-sizing: border-box;
  background: #cfd2d5;
  border: 1px solid #b8bbbe;
}
.snap-btn.on { background: #fff; border: 1px solid #3d9cf0; }
.status-text { color: #555; white-space: nowrap; }
.grip { margin-left: auto; margin-right: 3px; margin-top: 14px; }

.caption {
  position: absolute;
  left: 0;
  top: 780px;
  width: 1342px;
  text-align: center;
  color: #bcbcbc;
  font-family: "Open Sans", "Liberation Sans", sans-serif;
  font-size: 12.6px;
  line-height: 16px;
}
.controls {
  position: absolute;
  left: 531px;
  top: 798px;
  display: flex;
  align-items: center;
  gap: 1px;
}
.ctl {
  display: flex;
  align-items: center;
  justify-content: center;
  width: 24px;
  height: 24px;
  padding: 0;
  border: none;
  border-radius: 50%;
  background: #444;
  color: #fff;
  font-family: "Liberation Sans", sans-serif;
  font-size: 12px;
  font-weight: 700;
}
.one { letter-spacing: -0.5px; }
.play { width: 31px; height: 31px; margin: 0 -0.5px; }
</style>
